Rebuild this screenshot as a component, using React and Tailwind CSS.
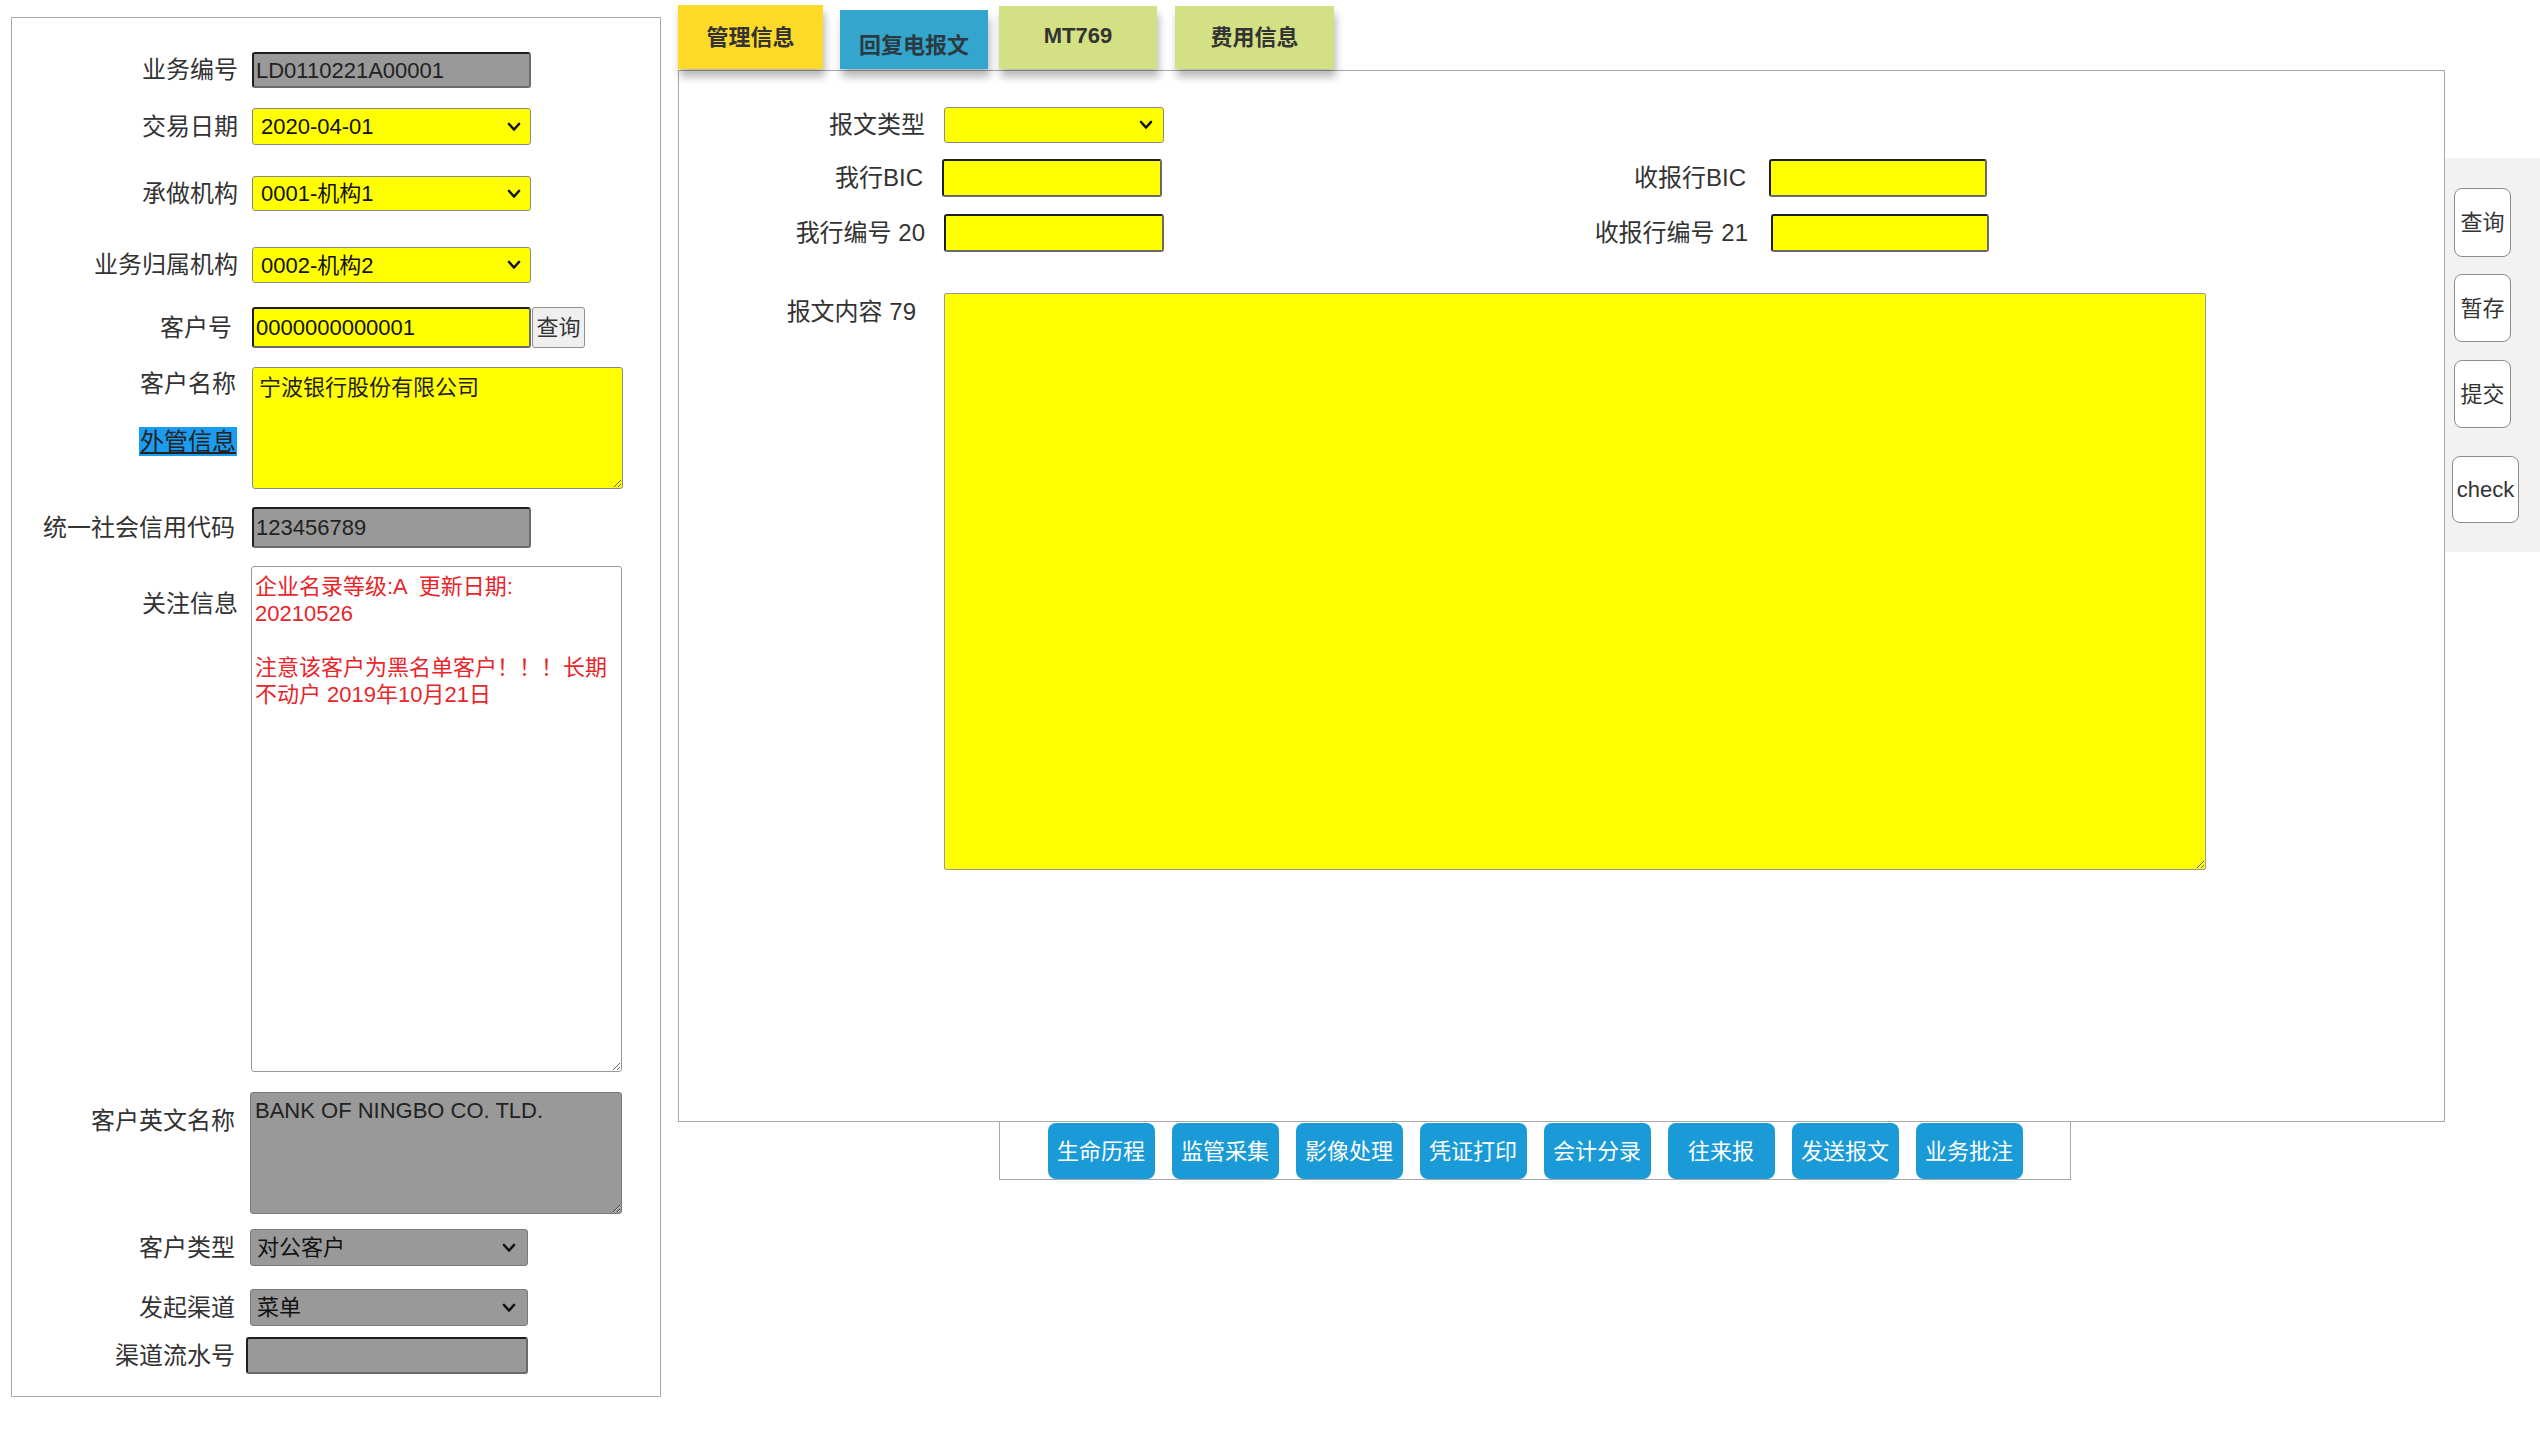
import React from "react";

function Chevron() {
  return (
    <svg width="14" height="10" viewBox="0 0 14 10" className="shrink-0">
      <path d="M2 2 L7 7.5 L12 2" fill="none" stroke="#111" strokeWidth="2.6" strokeLinecap="round" strokeLinejoin="round" />
    </svg>
  );
}

function Label({ children, className = "" }) {
  return (
    <div className={"shrink-0 text-right text-[24px] leading-[26px] text-[#333] whitespace-nowrap " + className}>
      {children}
    </div>
  );
}

const inset =
  "border-2 border-t-[#1e1e1e] border-l-[#1e1e1e] border-r-[#6a6a6a] border-b-[#6a6a6a] rounded-[3px]";

function LeftPanel() {
  return (
    <div className="mt-[17px] ml-[11px] w-[650px] shrink-0 border border-[#a8a8a8] pt-[34px] pb-[22px] flex flex-col">
      {/* 业务编号 */}
      <div className="flex items-center">
        <Label className="w-[226px]">业务编号</Label>
        <div className={"ml-[14px] w-[279px] h-[36px] bg-[#999999] flex items-center pl-[2px] text-[22px] text-[#222] " + inset}>
          LD0110221A00001
        </div>
      </div>
      {/* 交易日期 */}
      <div className="flex items-center mt-[20px]">
        <Label className="w-[226px]">交易日期</Label>
        <div className="ml-[14px] w-[279px] h-[37px] bg-[#ffff00] border border-[#8a8a8a] rounded-[3px] flex items-center justify-between pl-[8px] pr-[9px] text-[22px] text-[#111]">
          <span>2020-04-01</span>
          <Chevron />
        </div>
      </div>
      {/* 承做机构 */}
      <div className="flex items-center mt-[31px]">
        <Label className="w-[226px]">承做机构</Label>
        <div className="ml-[14px] w-[279px] h-[35px] bg-[#ffff00] border border-[#8a8a8a] rounded-[3px] flex items-center justify-between pl-[8px] pr-[9px] text-[22px] text-[#111]">
          <span>0001-机构1</span>
          <Chevron />
        </div>
      </div>
      {/* 业务归属机构 */}
      <div className="flex items-center mt-[36px]">
        <Label className="w-[226px]">业务归属机构</Label>
        <div className="ml-[14px] w-[279px] h-[36px] bg-[#ffff00] border border-[#8a8a8a] rounded-[3px] flex items-center justify-between pl-[8px] pr-[9px] text-[22px] text-[#111]">
          <span>0002-机构2</span>
          <Chevron />
        </div>
      </div>
      {/* 客户号 */}
      <div className="flex items-center mt-[24px]">
        <Label className="w-[226px] pr-[6px]">客户号</Label>
        <div className={"ml-[14px] w-[279px] h-[41px] bg-[#ffff00] flex items-center pl-[2px] text-[22px] text-[#111] " + inset}>
          0000000000001
        </div>
        <div className="ml-[1px] w-[53px] h-[41px] bg-[#efefef] border border-[#8f8f8f] rounded-[3px] flex items-center justify-center text-[22px] text-[#333]">
          查询
        </div>
      </div>
      {/* 客户名称 */}
      <div className="flex items-start mt-[19px]">
        <div className="w-[226px] shrink-0 flex flex-col items-end">
          <Label className="mt-[4px] pr-[2px]">客户名称</Label>
          <div className="mt-[30px] mr-[1px] bg-[#1a9cf0] px-[1px] text-[24px] leading-[29px] text-[#222] underline whitespace-nowrap">
            外管信息
          </div>
        </div>
        <textarea
          readOnly
          defaultValue="宁波银行股份有限公司"
          className="ml-[14px] w-[371px] h-[122px] bg-[#ffff00] border border-[#888] rounded-[3px] pl-[6px] pt-[6px] text-[22px] leading-[27px] text-[#222] outline-none overflow-hidden"
        />
      </div>
      {/* 统一社会信用代码 */}
      <div className="flex items-center mt-[18px]">
        <Label className="w-[226px] pr-[3px]">统一社会信用代码</Label>
        <div className={"ml-[14px] w-[279px] h-[41px] bg-[#999999] flex items-center pl-[2px] text-[22px] text-[#222] " + inset}>
          123456789
        </div>
      </div>
      {/* 关注信息 */}
      <div className="flex items-start mt-[18px]">
        <Label className="w-[226px] pt-[25px]">关注信息</Label>
        <textarea
          readOnly
          wrap="off"
          defaultValue={"企业名录等级:A  更新日期:\n20210526\n\n注意该客户为黑名单客户！！！长期\n不动户 2019年10月21日"}
          className="ml-[13px] w-[371px] h-[506px] bg-white border border-[#999] rounded-[3px] pl-[3px] pt-[6px] text-[22px] leading-[27px] text-[#e8262a] outline-none overflow-hidden"
        />
      </div>
      {/* 客户英文名称 */}
      <div className="flex items-start mt-[20px]">
        <Label className="w-[226px] pt-[16px] pr-[3px]">客户英文名称</Label>
        <textarea
          readOnly
          defaultValue="BANK OF NINGBO CO. TLD."
          className="ml-[12px] w-[372px] h-[122px] bg-[#999999] border border-[#7a7a7a] rounded-[3px] pl-[4px] pt-[4px] text-[22px] leading-[27px] text-[#222] outline-none overflow-hidden"
        />
      </div>
      {/* 客户类型 */}
      <div className="flex items-center mt-[15px]">
        <Label className="w-[226px] pr-[3px]">客户类型</Label>
        <div className="ml-[12px] w-[278px] h-[37px] bg-[#999999] border border-[#7a7a7a] rounded-[3px] flex items-center justify-between pl-[6px] pr-[11px] text-[22px] text-[#111]">
          <span>对公客户</span>
          <Chevron />
        </div>
      </div>
      {/* 发起渠道 */}
      <div className="flex items-center mt-[23px]">
        <Label className="w-[226px] pr-[3px]">发起渠道</Label>
        <div className="ml-[12px] w-[278px] h-[37px] bg-[#999999] border border-[#7a7a7a] rounded-[3px] flex items-center justify-between pl-[6px] pr-[11px] text-[22px] text-[#111]">
          <span>菜单</span>
          <Chevron />
        </div>
      </div>
      {/* 渠道流水号 */}
      <div className="flex items-center mt-[11px]">
        <Label className="w-[226px] pr-[3px]">渠道流水号</Label>
        <div className={"ml-[8px] w-[282px] h-[37px] bg-[#999999] " + inset}></div>
      </div>
    </div>
  );
}

function Tabs() {
  return (
    <div className="flex items-end h-[69px]">
      <div className="relative z-10 w-[145px] h-[64px] bg-[#fdda28] flex items-center justify-center text-[22px] font-bold text-[#333] shadow-[2px_8px_8px_rgba(0,0,0,0.28)]">
        管理信息
      </div>
      <div className="relative z-10 ml-[17px] w-[148px] h-[59px] bg-[#34a6ce] flex items-center justify-center pt-[11px] text-[22px] font-bold text-[#2b3a40] shadow-[2px_8px_8px_rgba(0,0,0,0.28)]">
        回复电报文
      </div>
      <div className="relative z-10 ml-[11px] w-[158px] h-[63px] bg-[#d3e084] flex items-center justify-center pb-[5px] text-[22px] font-bold text-[#333] shadow-[2px_8px_8px_rgba(0,0,0,0.28)]">
        MT769
      </div>
      <div className="relative z-10 ml-[18px] w-[159px] h-[63px] bg-[#d3e084] flex items-center justify-center text-[22px] font-bold text-[#333] shadow-[2px_8px_8px_rgba(0,0,0,0.28)]">
        费用信息
      </div>
    </div>
  );
}

function MainPanel() {
  return (
    <div className="mt-px h-[1052px] border border-[#a8a8a8] bg-white pt-[36px] flex flex-col">
      {/* 报文类型 */}
      <div className="flex items-center">
        <Label className="w-[246px]">报文类型</Label>
        <div className="ml-[19px] w-[220px] h-[36px] bg-[#ffff00] border border-[#8a8a8a] rounded-[3px] flex items-center justify-end pr-[10px]">
          <Chevron />
        </div>
      </div>
      {/* BIC row */}
      <div className="flex items-center mt-[16px]">
        <Label className="w-[246px] pr-[2px]">我行BIC</Label>
        <div className={"ml-[17px] w-[220px] h-[38px] bg-[#ffff00] " + inset}></div>
        <Label className="w-[586px] pr-[2px]">收报行BIC</Label>
        <div className={"ml-[21px] w-[218px] h-[38px] bg-[#ffff00] " + inset}></div>
      </div>
      {/* 编号 row */}
      <div className="flex items-center mt-[17px]">
        <Label className="w-[246px]">我行编号 20</Label>
        <div className={"ml-[19px] w-[220px] h-[38px] bg-[#ffff00] " + inset}></div>
        <Label className="w-[584px]">收报行编号 21</Label>
        <div className={"ml-[23px] w-[218px] h-[38px] bg-[#ffff00] " + inset}></div>
      </div>
      {/* 报文内容 */}
      <div className="flex items-start mt-[41px]">
        <Label className="w-[246px] pt-[6px] pr-[9px]">报文内容 79</Label>
        <textarea
          readOnly
          defaultValue=""
          className="ml-[19px] w-[1262px] h-[577px] bg-[#ffff00] border border-[#999] rounded-[2px] outline-none overflow-hidden"
        />
      </div>
    </div>
  );
}

function ActionBar() {
  const items = ["生命历程", "监管采集", "影像处理", "凭证打印", "会计分录", "往来报", "发送报文", "业务批注"];
  return (
    <div className="ml-[321px] -mt-px w-[1072px] h-[59px] border border-[#a8a8a8] flex items-stretch justify-center gap-[17px] pt-px">
      {items.map((t) => (
        <div
          key={t}
          className="w-[107px] bg-[#1a9ad6] rounded-[8px] flex items-center justify-center text-[22px] text-white"
        >
          {t}
        </div>
      ))}
    </div>
  );
}

function SideBar() {
  return (
    <div className="mt-[158px] w-[95px] h-[394px] shrink-0 bg-[#f2f2f2] flex flex-col items-start pt-[30px]">
      <div className="ml-[9px] w-[57px] h-[69px] bg-white border border-[#8c8c8c] rounded-[8px] flex items-center justify-center text-[22px] text-[#333]">
        查询
      </div>
      <div className="ml-[9px] mt-[17px] w-[57px] h-[68px] bg-white border border-[#8c8c8c] rounded-[8px] flex items-center justify-center text-[22px] text-[#333]">
        暂存
      </div>
      <div className="ml-[9px] mt-[18px] w-[57px] h-[68px] bg-white border border-[#8c8c8c] rounded-[8px] flex items-center justify-center text-[22px] text-[#333]">
        提交
      </div>
      <div className="ml-[7px] mt-[28px] w-[67px] h-[67px] bg-white border border-[#8c8c8c] rounded-[8px] flex items-center justify-center text-[22px] text-[#333]">
        check
      </div>
    </div>
  );
}

export default function App() {
  return (
    <div className="w-[2540px] h-[1440px] bg-white flex items-start font-['Liberation_Sans','Noto_Sans_CJK_SC',sans-serif] overflow-hidden">
      <LeftPanel />
      <div className="ml-[17px] w-[1767px] shrink-0 flex flex-col pt-0">
        <Tabs />
        <MainPanel />
        <ActionBar />
      </div>
      <SideBar />
    </div>
  );
}
